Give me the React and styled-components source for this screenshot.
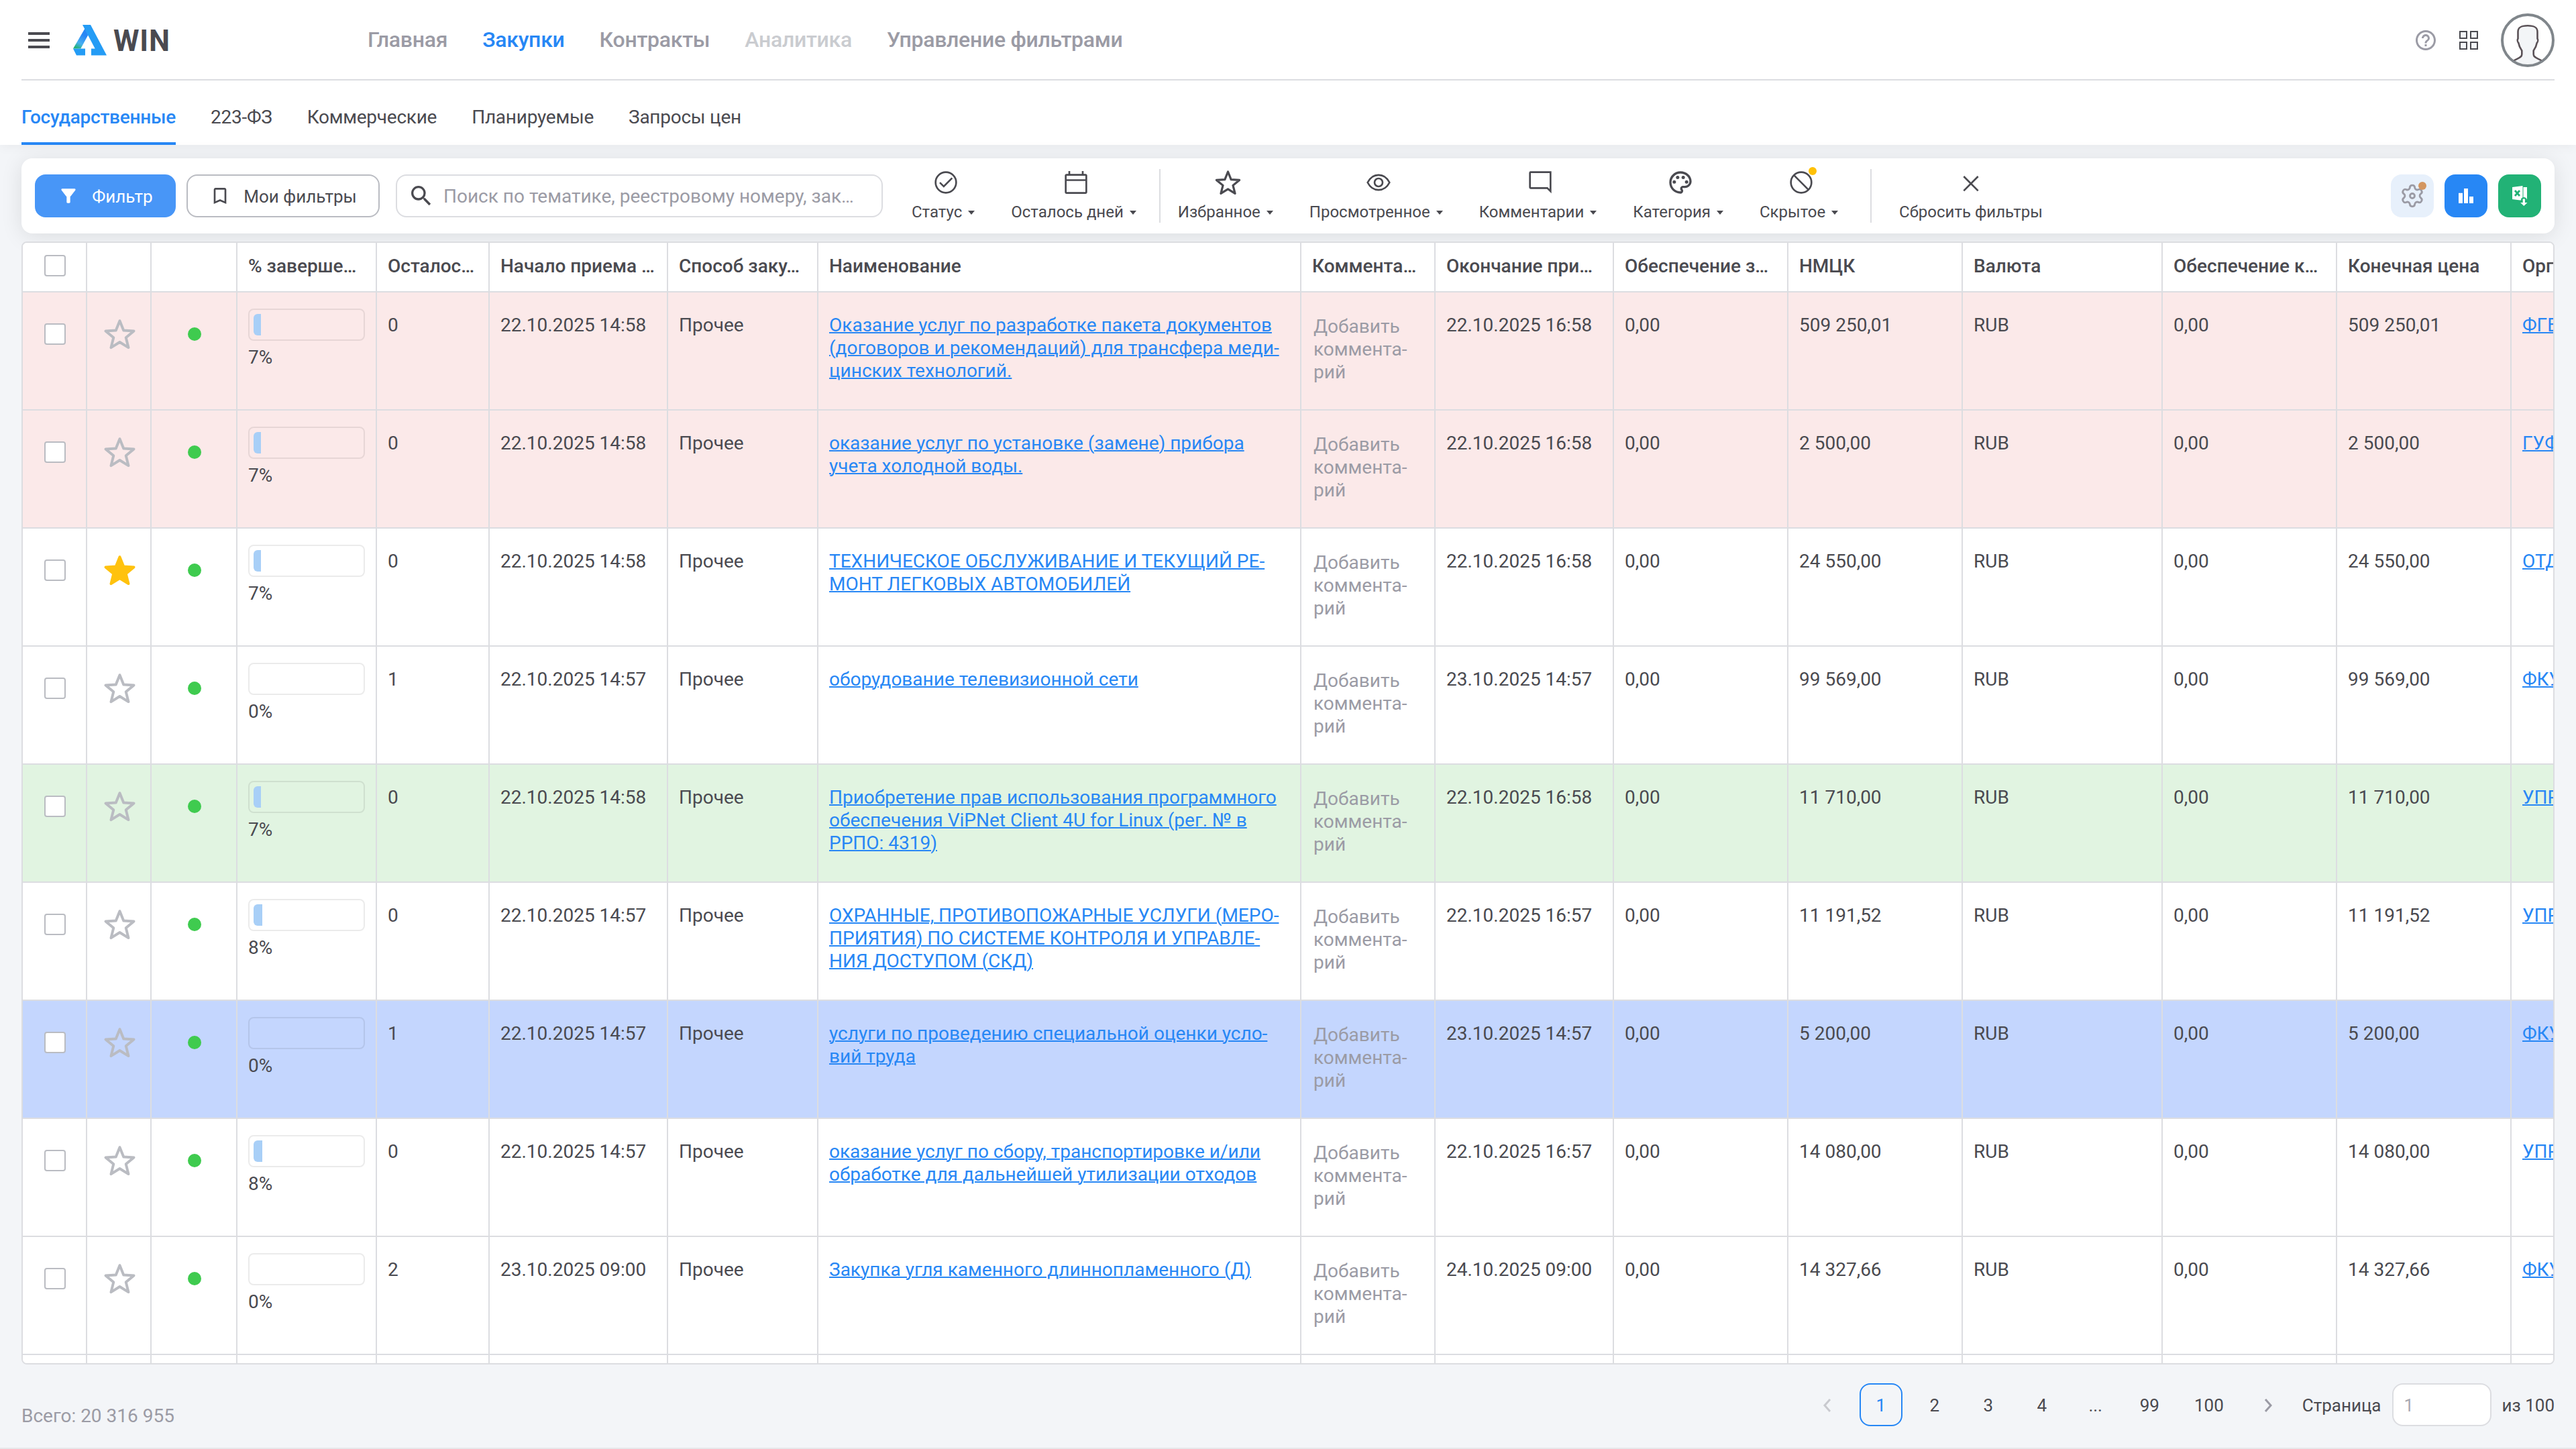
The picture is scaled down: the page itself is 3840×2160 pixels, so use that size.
import React from 'react';
import styled, { createGlobalStyle, css } from 'styled-components';
import {
  MdBookmarkBorder, MdFilterAlt, MdHelpOutline, MdOutlinePalette, MdSearch,
} from 'react-icons/md';

const colors = {
  text: '#4a4a50',
  muted: '#9b9ba5',
  disabled: '#caccd0',
  primary: '#2787f5',
  border: '#dcdde1',
  control: '#babcc2',
  page: '#f3f5f8',
  rowRed: '#fbe9e9',
  rowGreen: '#e1f4e1',
  rowBlue: '#c4d6fe',
};

const GlobalStyle = createGlobalStyle`
  * {
    box-sizing: border-box;
  }
  body {
    margin: 0;
    background: ${colors.page};
    color: ${colors.text};
    font-family: Roboto, "Liberation Sans", sans-serif;
    font-size: 28px;
    line-height: 34px;
  }
  svg {
    display: block;
    flex: none;
  }
`;

const Page = styled.div`
  display: flex;
  flex-direction: column;
  width: 3840px;
  height: 2160px;
  overflow: hidden;
  border-bottom: 2px solid #e6e7ea;
`;

const Top = styled.header`
  height: 216px;
  flex: none;
  padding: 0 32px;
  background: #fff;
  box-shadow: 0 2px 16px rgba(0, 0, 0, 0.05);
`;

const HeaderRow = styled.div`
  display: flex;
  align-items: center;
  height: 120px;
  border-bottom: 2px solid ${colors.border};
`;

const Brand = styled.div`
  display: flex;
  align-items: center;
  width: 516px;
  padding: 2px 0 0 10px;
`;

const Burger = styled.div`
  width: 32px;
  height: 24px;
  margin-right: 35px;
  display: flex;
  flex-direction: column;
  justify-content: space-between;

  span {
    height: 4px;
    background: ${colors.text};
  }
`;

const BrandName = styled.span`
  margin-left: 10px;
  padding-top: 2px;
  font-size: 44px;
  font-weight: 700;
  line-height: 46px;
  letter-spacing: 0.8px;
`;

const Nav = styled.nav`
  display: flex;
  flex: 1;
  gap: 52px;
  letter-spacing: -0.27px;
`;

const NavLink = styled.a`
  font-size: 32px;
  font-weight: 500;
  color: ${({ $active, $disabled }) => {
    if ($active) return colors.primary;
    return $disabled ? colors.disabled : colors.muted;
  }};
`;

const HeaderActions = styled.div`
  display: flex;
  align-items: center;
  padding-top: 2px;
`;

const HelpIcon = styled(MdHelpOutline)`
  color: ${colors.muted};
  margin-right: 32px;
`;

const AppsGrid = styled.div`
  display: grid;
  grid-template-columns: 12px 12px;
  grid-auto-rows: 12px;
  gap: 4px;
  margin-right: 34px;

  span {
    border: 2px solid ${colors.text};
    background: ${colors.page};
  }
`;

const Tabs = styled.nav`
  display: flex;
  gap: 52px;
  height: 96px;
  letter-spacing: -0.25px;
`;

const Tab = styled.a`
  padding-top: 38px;
  ${({ $active }) => $active && css`
    color: ${colors.primary};
    font-weight: 500;
    border-bottom: 4px solid ${colors.primary};
  `}
`;

const Toolbar = styled.section`
  display: flex;
  align-items: center;
  flex: none;
  height: 112px;
  margin: 20px 32px 12px;
  padding: 0 20px;
  border-radius: 16px;
  background: #fff;
  box-shadow: 0 4px 32px rgba(0, 0, 0, 0.1);
`;

const Button = styled.button`
  display: flex;
  align-items: center;
  justify-content: center;
  gap: 19px;
  width: ${({ $width }) => $width}px;
  height: 64px;
  margin-right: 16px;
  padding: 0;
  font: inherit;
  font-size: 26px;
  border-radius: 16px;
  border: 2px solid ${({ $primary }) => ($primary ? '#4896f7' : colors.control)};
  background: ${({ $primary }) => ($primary ? '#4896f7' : '#fff')};
  color: ${({ $primary }) => ($primary ? '#fff' : colors.text)};

  span {
    padding-top: 2px;
  }
`;

const Search = styled.div`
  display: flex;
  align-items: center;
  gap: 13px;
  width: 726px;
  height: 64px;
  margin-left: 8px;
  padding: 0 16px;
  border: 2px solid ${colors.border};
  border-radius: 16px;
`;

const Placeholder = styled.span`
  padding-top: 2px;
  color: ${colors.muted};
  white-space: nowrap;
`;

const ToolGroup = styled.div`
  display: flex;
  gap: 47px;
  padding: 0 ${({ $right }) => $right}px 0 ${({ $left }) => $left}px;
  height: 80px;
  border-right: ${({ $last }) => ($last ? 'none' : `2px solid ${colors.border}`)};
`;

const Tool = styled.div`
  display: flex;
  flex-direction: column;
  align-items: center;
`;

const ToolIcon = styled.div`
  position: relative;
  display: flex;
  align-items: center;
  justify-content: center;
  width: 44px;
  height: 40px;
`;

const ToolLabel = styled.div`
  display: flex;
  align-items: center;
  gap: 2px;
  margin-top: 9px;
  font-size: 24px;
  line-height: 30px;
  white-space: nowrap;
`;

const Badge = styled.span`
  position: absolute;
  top: ${({ $top }) => $top}px;
  right: ${({ $right }) => $right}px;
  width: 12px;
  height: 12px;
  border-radius: 50%;
  background: ${({ $color }) => $color};
`;

const ToolbarActions = styled.div`
  display: flex;
  gap: 16px;
  margin-left: auto;
`;

const SquareButton = styled.div`
  position: relative;
  display: flex;
  align-items: center;
  justify-content: center;
  width: 64px;
  height: 64px;
  border-radius: 16px;
  background: ${({ $bg }) => $bg};
`;

const Table = styled.section`
  flex: none;
  height: 1674px;
  margin: 0 32px;
  overflow: hidden;
  position: relative;
  border: 2px solid ${colors.border};
  border-radius: 8px;
  background: #fff;
`;

const Row = styled.div`
  display: grid;
  grid-template-columns: 96px 96px 128px 208px 168px 266px 224px 720px 200px 266px 260px 260px 298px 260px 260px 1fr;
  height: ${({ $head }) => ($head ? 74 : 176)}px;
  border-bottom: 2px solid ${colors.border};
  background: ${({ $bg }) => $bg || '#fff'};
`;

const Cell = styled.div`
  min-width: 0;
  padding: 32px 16px 0;
  border-right: 2px solid ${colors.border};
  overflow: hidden;
  white-space: nowrap;

  &:last-child {
    border-right: none;
  }
`;

const HeadCell = styled(Cell)`
  padding-top: 18px;
  font-weight: 500;
`;

const IconCell = styled(Cell)`
  display: flex;
  justify-content: center;
  align-items: center;
  padding: ${({ $head }) => ($head ? '0 0 4px 2px' : '0 0 50px 2px')};
`;

const CommentCell = styled(Cell)`
  padding: 34px 18px 0;
  color: ${colors.muted};
`;

const Line = styled.div`
  height: 34px;
`;

const Link = styled.a`
  color: ${colors.primary};
  text-decoration: underline;
  text-decoration-thickness: 2px;
`;

const Checkbox = styled.span`
  width: 32px;
  height: 32px;
  border: 2px solid ${colors.control};
  border-radius: 4px;
  background: #fff;
`;

const StatusDot = styled.span`
  width: 20px;
  height: 20px;
  border-radius: 50%;
  background: #3fcb4f;
`;

const ProgressCell = styled(Cell)`
  padding: 24px 16px 0;
`;

const Progress = styled.div`
  height: 48px;
  margin-bottom: 8px;
  padding: 6px;
  border: 2px solid rgba(0, 0, 0, 0.08);
  border-radius: 8px;
`;

const ProgressFill = styled.div`
  height: 32px;
  border-radius: 6px 0 0 6px;
  background: #a8cff7;
`;

const Footer = styled.footer`
  display: flex;
  align-items: flex-start;
  justify-content: space-between;
  padding: 28px 32px 0;
`;

const Total = styled.span`
  padding-top: 32px;
  color: ${colors.muted};
`;

const Pagination = styled.div`
  display: flex;
  align-items: center;
  gap: 16px;
  font-size: 26px;
`;

const PageLabel = styled.span`
  padding-top: 2px;
`;

const PageItem = styled.div`
  display: flex;
  align-items: center;
  justify-content: center;
  min-width: 64px;
  height: 64px;
  padding: 2px 16px 0;
  border: 2px solid ${({ $active }) => ($active ? colors.primary : 'transparent')};
  border-radius: 16px;
  color: ${({ $active }) => ($active ? colors.primary : 'inherit')};
`;

const NextItem = styled(PageItem)`
  margin-right: 3px;
`;

const PageInput = styled.div`
  display: flex;
  align-items: center;
  width: 148px;
  height: 64px;
  padding: 2px 0 0 16px;
  border: 2px solid ${colors.border};
  border-radius: 16px;
  background: #fff;
  color: #a9a9b1;
`;

const STAR = '12,2.8 14.59,9.24 21.51,9.71 16.18,14.16 17.88,20.89 12,17.2 6.12,20.89 7.82,14.16 2.49,9.71 9.41,9.24';

const Star = ({ size, color, filled }) => (
  <svg width={size} height={size} viewBox="0 0 24 24" fill={filled ? color : 'none'} stroke={color} strokeWidth="1.8" strokeLinejoin="round">
    <polygon points={STAR} />
  </svg>
);

const LineIcon = ({ children }) => (
  <svg width="40" height="40" viewBox="0 0 24 24" fill="none" stroke={colors.text} strokeWidth="1.6">
    {children}
  </svg>
);

const Caret = () => (
  <svg width="24" height="24" viewBox="0 0 24 24" fill={colors.text}>
    <path d="M7 10h10l-5 6z" />
  </svg>
);

const Chevron = ({ color, left }) => (
  <svg width="14" height="22" viewBox="0 0 14 22" fill="none" stroke={color} strokeWidth="3">
    <path d={left ? 'M11 2L3 11l8 9' : 'M3 2l8 9-8 9'} />
  </svg>
);

const Logo = () => (
  <svg width="50" height="46" viewBox="0 0 50 46">
    <defs>
      <linearGradient id="leg" x1="0.7" y1="0" x2="0.3" y2="1">
        <stop offset="0.3" stopColor="#2787f5" />
        <stop offset="0.72" stopColor="#48b0f0" />
        <stop offset="1" stopColor="#22b276" />
      </linearGradient>
    </defs>
    <path d="M17.7 5.3L0 35.5h11.3l11-20.2z" fill="url(#leg)" />
    <path d="M0 35.5L5 45.5h13v-10zM14 0h12l24 45.5H27v-10h5.7z" fill="#249cf5" />
  </svg>
);

const Avatar = () => (
  <svg width="80" height="80" viewBox="0 0 80 80">
    <path
      d="M19 70.5c6-3.6 12.3-4.5 12.3-9.5v-5.5c-2.5-3.5-4.3-7-5-11.5-1.5-1.5-2-4.5-.8-6.5v-10c0-6.5 4-9.2 14.5-9.2s14.5 2.7 14.5 9.2v10c1.2 2 .7 5-.8 6.5-.7 4.5-2.5 8-5 11.5v5.5c0 5 6.3 5.9 12.3 9.5C53 80 28 80 19 70.5z"
      fill="#f3f5f7"
    />
    <path
      d="M19 70.5c6-3.6 12.3-4.5 12.3-9.5v-5.5c-2.5-3.5-4.3-7-5-11.5-1.5-1.5-2-4.5-.8-6.5v-10c0-6.5 4-9.2 14.5-9.2s14.5 2.7 14.5 9.2v10c1.2 2 .7 5-.8 6.5-.7 4.5-2.5 8-5 11.5v5.5c0 5 6.3 5.9 12.3 9.5"
      fill="none"
      stroke="#5b5257"
      strokeWidth="2.6"
    />
    <circle cx="40" cy="40" r="38" fill="none" stroke="#80868b" strokeWidth="4" />
  </svg>
);

const GearIcon = () => (
  <svg width="38" height="38" viewBox="0 0 24 24" fill="none" stroke={colors.muted} strokeWidth="1.8">
    <path d="M9.671 4.136a2.34 2.34 0 0 1 4.659 0 2.34 2.34 0 0 0 3.319 1.915 2.34 2.34 0 0 1 2.33 4.033 2.34 2.34 0 0 0 0 3.831 2.34 2.34 0 0 1-2.33 4.033 2.34 2.34 0 0 0-3.319 1.915 2.34 2.34 0 0 1-4.659 0 2.34 2.34 0 0 0-3.32-1.915 2.34 2.34 0 0 1-2.33-4.033 2.34 2.34 0 0 0 0-3.831A2.34 2.34 0 0 1 6.35 6.051a2.34 2.34 0 0 0 3.319-1.915z" />
    <circle cx="12" cy="12" r="2.2" />
  </svg>
);

const ChartIcon = () => (
  <svg width="22" height="22" viewBox="0 0 22 22" fill="#fff">
    <path d="M0 6.7h6V22H0zM8 0h6v22H8zM16 12h6v10h-6z" />
  </svg>
);

const ExcelIcon = () => (
  <svg width="24" height="32" viewBox="0 0 24 32">
    <path d="M1 3l15.500-2v22L1 21z" fill="#fff" />
    <path d="M17.500 3H23v18h-5.500z" fill="#fff" />
    <circle cx="18.3" cy="22.5" r="4.500" fill="#22b276" />
    <path d="M5 8l7 8M12 8l-7 8" stroke="#22b276" strokeWidth="2.8" />
    <path d="M16.700 20.500h3.200V26h3.600l-5.200 5L13.100 26h3.600z" fill="#fff" />
  </svg>
);

const groups = [
  {
    left: 43,
    right: 27,
    tools: [
      {
        label: 'Статус',
        icon: (
          <LineIcon>
            <circle cx="12" cy="12" r="9.2" />
            <path d="M6.6 12.1l3.5 3.4 7.5-7.5" />
          </LineIcon>
        ),
      },
      {
        label: 'Осталось дней',
        icon: (
          <LineIcon>
            <rect x="2.8" y="5.2" width="18.4" height="16.2" rx="0.8" />
            <path d="M2.8 9.9h18.4M6 1.8v3M18 1.8v3" />
          </LineIcon>
        ),
      },
    ],
  },
  {
    left: 26,
    right: 41,
    tools: [
      { label: 'Избранное', icon: <Star size={43} color={colors.text} /> },
      {
        label: 'Просмотренное',
        icon: (
          <LineIcon>
            <path d="M2.2 12c2.3-4.5 5.8-6.7 9.8-6.7s7.5 2.2 9.8 6.7c-2.3 4.5-5.8 6.7-9.8 6.7S4.5 16.5 2.2 12z" />
            <circle cx="12" cy="12" r="3.6" />
          </LineIcon>
        ),
      },
      {
        label: 'Комментарии',
        icon: (
          <LineIcon>
            <path d="M3.4 2.8h17.8v17L18.3 17H3.4a.6.6 0 0 1-.6-.6v-13a.6.6 0 0 1 .6-.6z" />
          </LineIcon>
        ),
      },
      { label: 'Категория', icon: <MdOutlinePalette size={40} color={colors.text} /> },
      {
        label: 'Скрытое',
        badge: true,
        icon: (
          <LineIcon>
            <circle cx="12" cy="12" r="9.2" />
            <path d="M5.5 5.5l13 13" />
          </LineIcon>
        ),
      },
    ],
  },
  {
    left: 41,
    right: 0,
    tools: [
      {
        label: 'Сбросить фильтры',
        plain: true,
        icon: (
          <LineIcon>
            <path d="M5.6 6.6l12.8 12.8M18.4 6.6L5.6 19.4" />
          </LineIcon>
        ),
      },
    ],
  },
];

const headings = [
  '% заверше…', 'Осталос…', 'Начало приема …', 'Способ заку…', 'Наименование', 'Коммента…',
  'Окончание при…', 'Обеспечение з…', 'НМЦК', 'Валюта', 'Обеспечение к…', 'Конечная цена', 'Орган',
];

const rows = [
  {
    percent: 7, days: 0, start: '22.10.2025 14:58', end: '22.10.2025 16:58', price: '509 250,01', org: 'ФГБУ', bg: colors.rowRed,
    name: ['Оказание услуг по разработке пакета документов', '(договоров и рекомендаций) для трансфера меди-', 'цинских технологий.'],
  },
  {
    percent: 7, days: 0, start: '22.10.2025 14:58', end: '22.10.2025 16:58', price: '2 500,00', org: 'ГУФСИН', bg: colors.rowRed,
    name: ['оказание услуг по установке (замене) прибора', 'учета холодной воды.'],
  },
  {
    percent: 7, days: 0, start: '22.10.2025 14:58', end: '22.10.2025 16:58', price: '24 550,00', org: 'ОТДЕЛ', favorite: true,
    name: ['ТЕХНИЧЕСКОЕ ОБСЛУЖИВАНИЕ И ТЕКУЩИЙ РЕ-', 'МОНТ ЛЕГКОВЫХ АВТОМОБИЛЕЙ'],
  },
  {
    percent: 0, days: 1, start: '22.10.2025 14:57', end: '23.10.2025 14:57', price: '99 569,00', org: 'ФКУ',
    name: ['оборудование телевизионной сети'],
  },
  {
    percent: 7, days: 0, start: '22.10.2025 14:58', end: '22.10.2025 16:58', price: '11 710,00', org: 'УПРАВЛЕНИЕ', bg: colors.rowGreen,
    name: ['Приобретение прав использования программного', 'обеспечения ViPNet Client 4U for Linux (рег. № в', 'РРПО: 4319)'],
  },
  {
    percent: 8, days: 0, start: '22.10.2025 14:57', end: '22.10.2025 16:57', price: '11 191,52', org: 'УПРАВЛЕНИЕ',
    name: ['ОХРАННЫЕ, ПРОТИВОПОЖАРНЫЕ УСЛУГИ (МЕРО-', 'ПРИЯТИЯ) ПО СИСТЕМЕ КОНТРОЛЯ И УПРАВЛЕ-', 'НИЯ ДОСТУПОМ (СКД)'],
  },
  {
    percent: 0, days: 1, start: '22.10.2025 14:57', end: '23.10.2025 14:57', price: '5 200,00', org: 'ФКУ', bg: colors.rowBlue,
    name: ['услуги по проведению специальной оценки усло-', 'вий труда'],
  },
  {
    percent: 8, days: 0, start: '22.10.2025 14:57', end: '22.10.2025 16:57', price: '14 080,00', org: 'УПРАВЛЕНИЕ',
    name: ['оказание услуг по сбору, транспортировке и/или', 'обработке для дальнейшей утилизации отходов'],
  },
  {
    percent: 0, days: 2, start: '23.10.2025 09:00', end: '24.10.2025 09:00', price: '14 327,66', org: 'ФКУ',
    name: ['Закупка угля каменного длиннопламенного (Д)'],
  },
];

const Purchase = ({ row }) => (
  <Row $bg={row.bg}>
    <IconCell><Checkbox /></IconCell>
    <IconCell>
      <Star size={53} color={row.favorite ? '#ffc20e' : colors.control} filled={row.favorite} />
    </IconCell>
    <IconCell><StatusDot /></IconCell>
    <ProgressCell>
      <Progress>
        {row.percent > 0 && <ProgressFill style={{ width: `${row.percent}%` }} />}
      </Progress>
      {`${row.percent}%`}
    </ProgressCell>
    <Cell>{row.days}</Cell>
    <Cell>{row.start}</Cell>
    <Cell>Прочее</Cell>
    <Cell>
      {row.name.map((line) => <Line key={line}><Link>{line}</Link></Line>)}
    </Cell>
    <CommentCell>
      <Line>Добавить</Line>
      <Line>коммента-</Line>
      <Line>рий</Line>
    </CommentCell>
    <Cell>{row.end}</Cell>
    <Cell>0,00</Cell>
    <Cell>{row.price}</Cell>
    <Cell>RUB</Cell>
    <Cell>0,00</Cell>
    <Cell>{row.price}</Cell>
    <Cell><Link>{row.org}</Link></Cell>
  </Row>
);

const App = () => (
  <Page>
    <GlobalStyle />
    <Top>
      <HeaderRow>
        <Brand>
          <Burger>
            <span />
            <span />
            <span />
          </Burger>
          <Logo />
          <BrandName>WIN</BrandName>
        </Brand>
        <Nav>
          <NavLink>Главная</NavLink>
          <NavLink $active>Закупки</NavLink>
          <NavLink>Контракты</NavLink>
          <NavLink $disabled>Аналитика</NavLink>
          <NavLink>Управление фильтрами</NavLink>
        </Nav>
        <HeaderActions>
          <HelpIcon size={36} />
          <AppsGrid>
            <span />
            <span />
            <span />
            <span />
          </AppsGrid>
          <Avatar />
        </HeaderActions>
      </HeaderRow>
      <Tabs>
        <Tab $active>Государственные</Tab>
        <Tab>223-ФЗ</Tab>
        <Tab>Коммерческие</Tab>
        <Tab>Планируемые</Tab>
        <Tab>Запросы цен</Tab>
      </Tabs>
    </Top>

    <Toolbar>
      <Button $primary $width={210}>
        <MdFilterAlt size={32} />
        <span>Фильтр</span>
      </Button>
      <Button $width={288}>
        <MdBookmarkBorder size={32} />
        <span>Мои фильтры</span>
      </Button>
      <Search>
        <MdSearch size={40} />
        <Placeholder>Поиск по тематике, реестровому номеру, зак…</Placeholder>
      </Search>
      {groups.map((group, i) => (
        <ToolGroup
          key={group.tools[0].label}
          $left={group.left}
          $right={group.right}
          $last={i === groups.length - 1}
        >
          {group.tools.map((tool) => (
            <Tool key={tool.label}>
              <ToolIcon>
                {tool.icon}
                {tool.badge && <Badge $top={-3} $right={-1} $color="#ffc107" />}
              </ToolIcon>
              <ToolLabel>
                {tool.label}
                {!tool.plain && <Caret />}
              </ToolLabel>
            </Tool>
          ))}
        </ToolGroup>
      ))}
      <ToolbarActions>
        <SquareButton $bg="#e7f0fb">
          <GearIcon />
          <Badge $top={11} $right={11} $color="#d39660" />
        </SquareButton>
        <SquareButton $bg={colors.primary}><ChartIcon /></SquareButton>
        <SquareButton $bg="#22b276"><ExcelIcon /></SquareButton>
      </ToolbarActions>
    </Toolbar>

    <Table>
      <Row $head>
        <IconCell $head><Checkbox /></IconCell>
        <IconCell />
        <IconCell />
        {headings.map((title) => <HeadCell key={title}>{title}</HeadCell>)}
      </Row>
      {rows.map((row) => <Purchase key={row.name[0]} row={row} />)}
      <Row>
        {Array.from({ length: 16 }, (_, i) => <Cell key={i} />)}
      </Row>
    </Table>

    <Footer>
      <Total>Всего: 20 316 955</Total>
      <Pagination>
        <PageItem><Chevron left color="#c9cacf" /></PageItem>
        <PageItem $active>1</PageItem>
        <PageItem>2</PageItem>
        <PageItem>3</PageItem>
        <PageItem>4</PageItem>
        <PageItem>...</PageItem>
        <PageItem>99</PageItem>
        <PageItem>100</PageItem>
        <NextItem><Chevron color={colors.muted} /></NextItem>
        <PageLabel>Страница</PageLabel>
        <PageInput>1</PageInput>
        <PageLabel>из 100</PageLabel>
      </Pagination>
    </Footer>
  </Page>
);

export default App;
